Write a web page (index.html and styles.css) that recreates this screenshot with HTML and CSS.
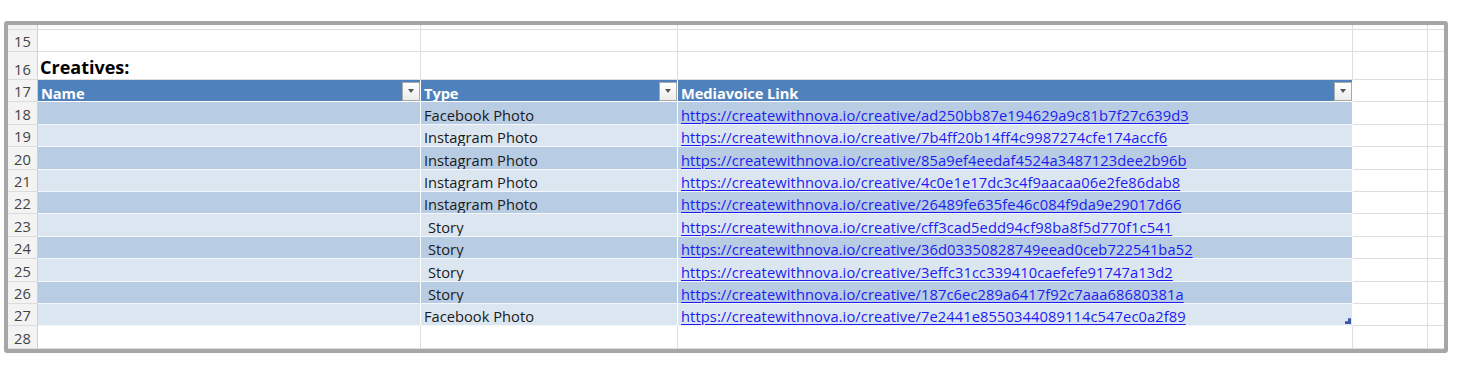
FILE: index.html
```html
<!DOCTYPE html>
<html>
<head>
<meta charset="utf-8">
<link rel="stylesheet" href="styles.css">
</head>
<body>
<div class="frame">
  <div class="sheet">
    <!-- row 14 (partially scrolled out) -->
    <div class="rh">14</div><div class="c"></div><div class="c"></div><div class="c"></div><div class="c"></div><div class="c"></div>
    <!-- row 15 -->
    <div class="rh">15</div><div class="c"></div><div class="c"></div><div class="c"></div><div class="c"></div><div class="c"></div>
    <!-- row 16 -->
    <div class="rh">16</div><div class="c title">Creatives:</div><div class="c"></div><div class="c"></div><div class="c"></div><div class="c"></div>
    <!-- row 17 header -->
    <div class="rh">17</div>
    <div class="c th"><span>Name</span><span class="dd"><i></i></span></div>
    <div class="c th"><span>Type</span><span class="dd"><i></i></span></div>
    <div class="c th"><span>Mediavoice Link</span><span class="dd"><i></i></span></div>
    <div class="c"></div><div class="c"></div>
    <!-- 18 -->
    <div class="rh">18</div><div class="c td dk"></div><div class="c td dk">Facebook Photo</div><div class="c td dk"><a class="lnk">https://createwithnova.io/creative/ad250bb87e194629a9c81b7f27c639d3</a></div><div class="c"></div><div class="c"></div>
    <!-- 19 -->
    <div class="rh">19</div><div class="c td lt"></div><div class="c td lt">Instagram Photo</div><div class="c td lt"><a class="lnk">https://createwithnova.io/creative/7b4ff20b14ff4c9987274cfe174accf6</a></div><div class="c"></div><div class="c"></div>
    <!-- 20 -->
    <div class="rh">20</div><div class="c td dk"></div><div class="c td dk">Instagram Photo</div><div class="c td dk"><a class="lnk">https://createwithnova.io/creative/85a9ef4eedaf4524a3487123dee2b96b</a></div><div class="c"></div><div class="c"></div>
    <!-- 21 -->
    <div class="rh">21</div><div class="c td lt"></div><div class="c td lt">Instagram Photo</div><div class="c td lt"><a class="lnk">https://createwithnova.io/creative/4c0e1e17dc3c4f9aacaa06e2fe86dab8</a></div><div class="c"></div><div class="c"></div>
    <!-- 22 -->
    <div class="rh">22</div><div class="c td dk"></div><div class="c td dk">Instagram Photo</div><div class="c td dk"><a class="lnk">https://createwithnova.io/creative/26489fe635fe46c084f9da9e29017d66</a></div><div class="c"></div><div class="c"></div>
    <!-- 23 -->
    <div class="rh">23</div><div class="c td lt"></div><div class="c td lt sp">Story</div><div class="c td lt"><a class="lnk">https://createwithnova.io/creative/cff3cad5edd94cf98ba8f5d770f1c541</a></div><div class="c"></div><div class="c"></div>
    <!-- 24 -->
    <div class="rh">24</div><div class="c td dk"></div><div class="c td dk sp">Story</div><div class="c td dk"><a class="lnk">https://createwithnova.io/creative/36d03350828749eead0ceb722541ba52</a></div><div class="c"></div><div class="c"></div>
    <!-- 25 -->
    <div class="rh">25</div><div class="c td lt"></div><div class="c td lt sp">Story</div><div class="c td lt"><a class="lnk">https://createwithnova.io/creative/3effc31cc339410caefefe91747a13d2</a></div><div class="c"></div><div class="c"></div>
    <!-- 26 -->
    <div class="rh">26</div><div class="c td dk"></div><div class="c td dk sp">Story</div><div class="c td dk"><a class="lnk">https://createwithnova.io/creative/187c6ec289a6417f92c7aaa68680381a</a></div><div class="c"></div><div class="c"></div>
    <!-- 27 -->
    <div class="rh">27</div><div class="c td lt"></div><div class="c td lt">Facebook Photo</div><div class="c td lt last"><a class="lnk">https://createwithnova.io/creative/7e2441e8550344089114c547ec0a2f89</a></div><div class="c"></div><div class="c"></div>
    <!-- 28 -->
    <div class="rh">28</div><div class="c"></div><div class="c"></div><div class="c"></div><div class="c"></div><div class="c"></div>
  </div>
</div>
</body>
</html>
```

FILE: styles.css
```css
html, body {
  margin: 0;
  padding: 0;
  background: #ffffff;
}

body {
  font-family: "Open Sans", "Liberation Sans", sans-serif;
  font-size: 14.7px;
  color: #1a1a1a;
}

.frame {
  margin: 21px 0 0 4px;
  width: 1444px;
  height: 332px;
  box-sizing: border-box;
  border: 4px solid #a6a6a6;
  border-radius: 3px;
  overflow: hidden;
  background: #ffffff;
}

.sheet {
  margin-top: -17px;
  display: grid;
  grid-template-columns: 30px 383px 257px 675px 75px 64px;
  grid-template-rows: 22px 22.4px 27.6px repeat(12, 22.4px);
}

.rh {
  box-sizing: border-box;
  background: #f3f3f3;
  border-bottom: 1px solid #dcdcdc;
  border-right: 1px solid #d0d0d0;
  color: #444444;
  display: flex;
  align-items: flex-end;
  justify-content: center;
  line-height: 20px;
  overflow: hidden;
}

.c {
  box-sizing: border-box;
  border-right: 1px solid #dedede;
  border-bottom: 1px solid #dedede;
  display: flex;
  align-items: flex-end;
  padding-left: 3px;
  line-height: 18px;
  white-space: nowrap;
  overflow: hidden;
  position: relative;
}

.title {
  font-weight: 700;
  font-size: 18px;
  color: #000000;
  line-height: 23px;
  padding-left: 2px;
}

.th {
  background: #4f81bd;
  color: #ffffff;
  font-weight: 700;
  border-right-color: #ffffff;
  border-bottom-color: #ffffff;
  justify-content: space-between;
  align-items: stretch;
}

.th span:first-child {
  align-self: flex-end;
  line-height: 16px;
  letter-spacing: -0.1px;
}

.dd {
  width: 18px;
  height: 19px;
  margin-top: 2px;
  box-sizing: border-box;
  border: 1px solid #a9a9a9;
  background: linear-gradient(#ffffff, #ececec);
  display: flex;
  align-items: center;
  justify-content: center;
}

.dd i {
  width: 0;
  height: 0;
  border-left: 3.5px solid transparent;
  border-right: 3.5px solid transparent;
  border-top: 4px solid #555555;
}

.td {
  border-right-color: #ffffff;
  border-bottom-color: #f4f7fb;
}

.dk {
  background: #b8cce4;
}

.lt {
  background: #dce6f1;
}

.sp {
  padding-left: 7px;
}

.lnk {
  color: #1c1cf0;
  text-decoration: underline;
  text-underline-offset: 2px;
  letter-spacing: 0.09px;
}

.last::after {
  content: "";
  position: absolute;
  right: 1px;
  bottom: 1px;
  width: 6px;
  height: 6px;
  background: #3c56a8;
  clip-path: polygon(50% 0, 100% 0, 100% 100%, 0 100%, 0 50%, 50% 50%);
}
```
